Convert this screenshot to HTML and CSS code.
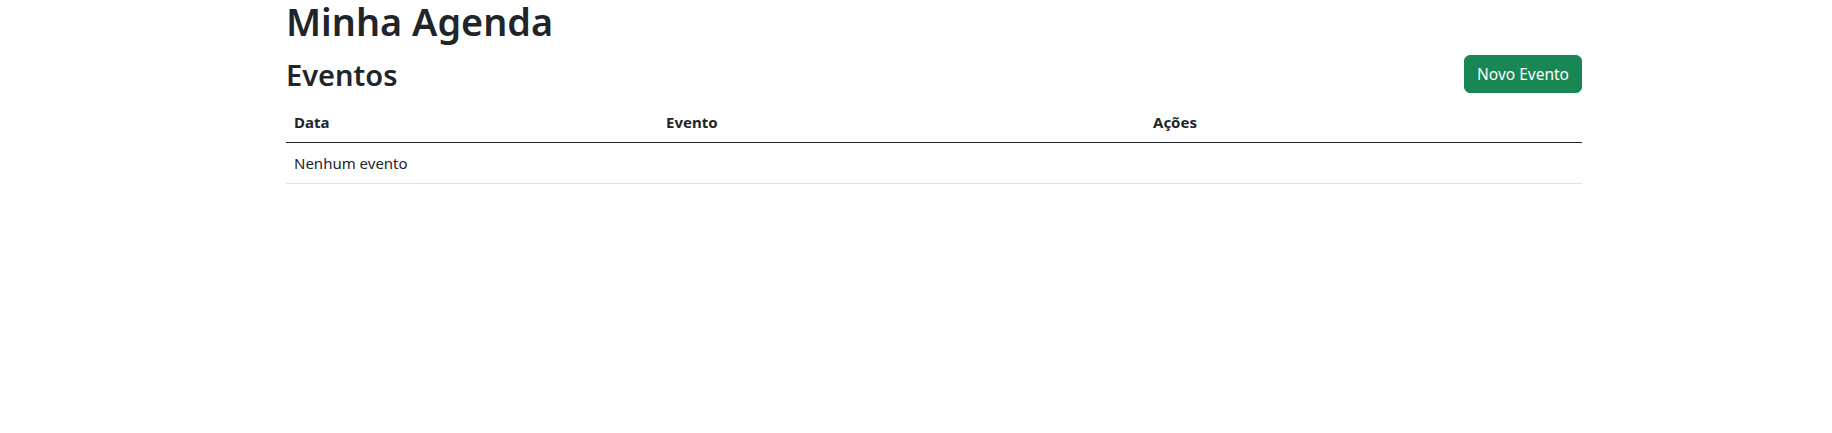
FILE: index.html
```html
<!DOCTYPE html>
<html lang="pt-BR">
<head>
<meta charset="utf-8">
<title>Minha Agenda</title>
<link rel="stylesheet" href="styles.css">
</head>
<body>
<div class="container">
  <h1 class="title">Minha Agenda</h1>
  <div class="bar">
    <h2 class="subtitle">Eventos</h2>
    <button class="btn">Novo Evento</button>
  </div>
  <table class="table">
    <thead>
      <tr>
        <th class="col-data">Data</th>
        <th class="col-evento">Evento</th>
        <th>Ações</th>
      </tr>
    </thead>
    <tbody>
      <tr>
        <td colspan="3">Nenhum evento</td>
      </tr>
    </tbody>
  </table>
</div>
</body>
</html>
```

FILE: styles.css
```css
html, body {
  margin: 0;
  padding: 0;
  background: #fff;
}
body {
  font-family: "Noto Sans", "Open Sans", sans-serif;
  font-size: 15px;
  line-height: 24px;
  color: #212529;
}
.container {
  width: 1296px;
  margin-left: 286px;
}
.title {
  font-size: 37.8px;
  font-weight: 600;
  line-height: 43px;
  margin: 0 0 12px 0;
}
.bar {
  display: flex;
  align-items: center;
  justify-content: space-between;
  height: 38px;
}
.subtitle {
  font-size: 29px;
  font-weight: 600;
  line-height: 35px;
  margin: 0;
}
.btn {
  font-family: inherit;
  font-size: 15.5px;
  line-height: 24px;
  color: #fff;
  background: #198754;
  border: 1px solid #198754;
  border-radius: 6px;
  padding: 6px 12px;
  cursor: pointer;
}
.table {
  width: 100%;
  margin-top: 9px;
  border-collapse: collapse;
}
.table th, .table td {
  text-align: left;
  padding: 8px;
  border-bottom: 1px solid #dee2e6;
}
.table th {
  font-weight: 700;
  border-bottom: 1px solid #212529;
}
.col-data { width: 356px; }
.col-evento { width: 471px; }
```
